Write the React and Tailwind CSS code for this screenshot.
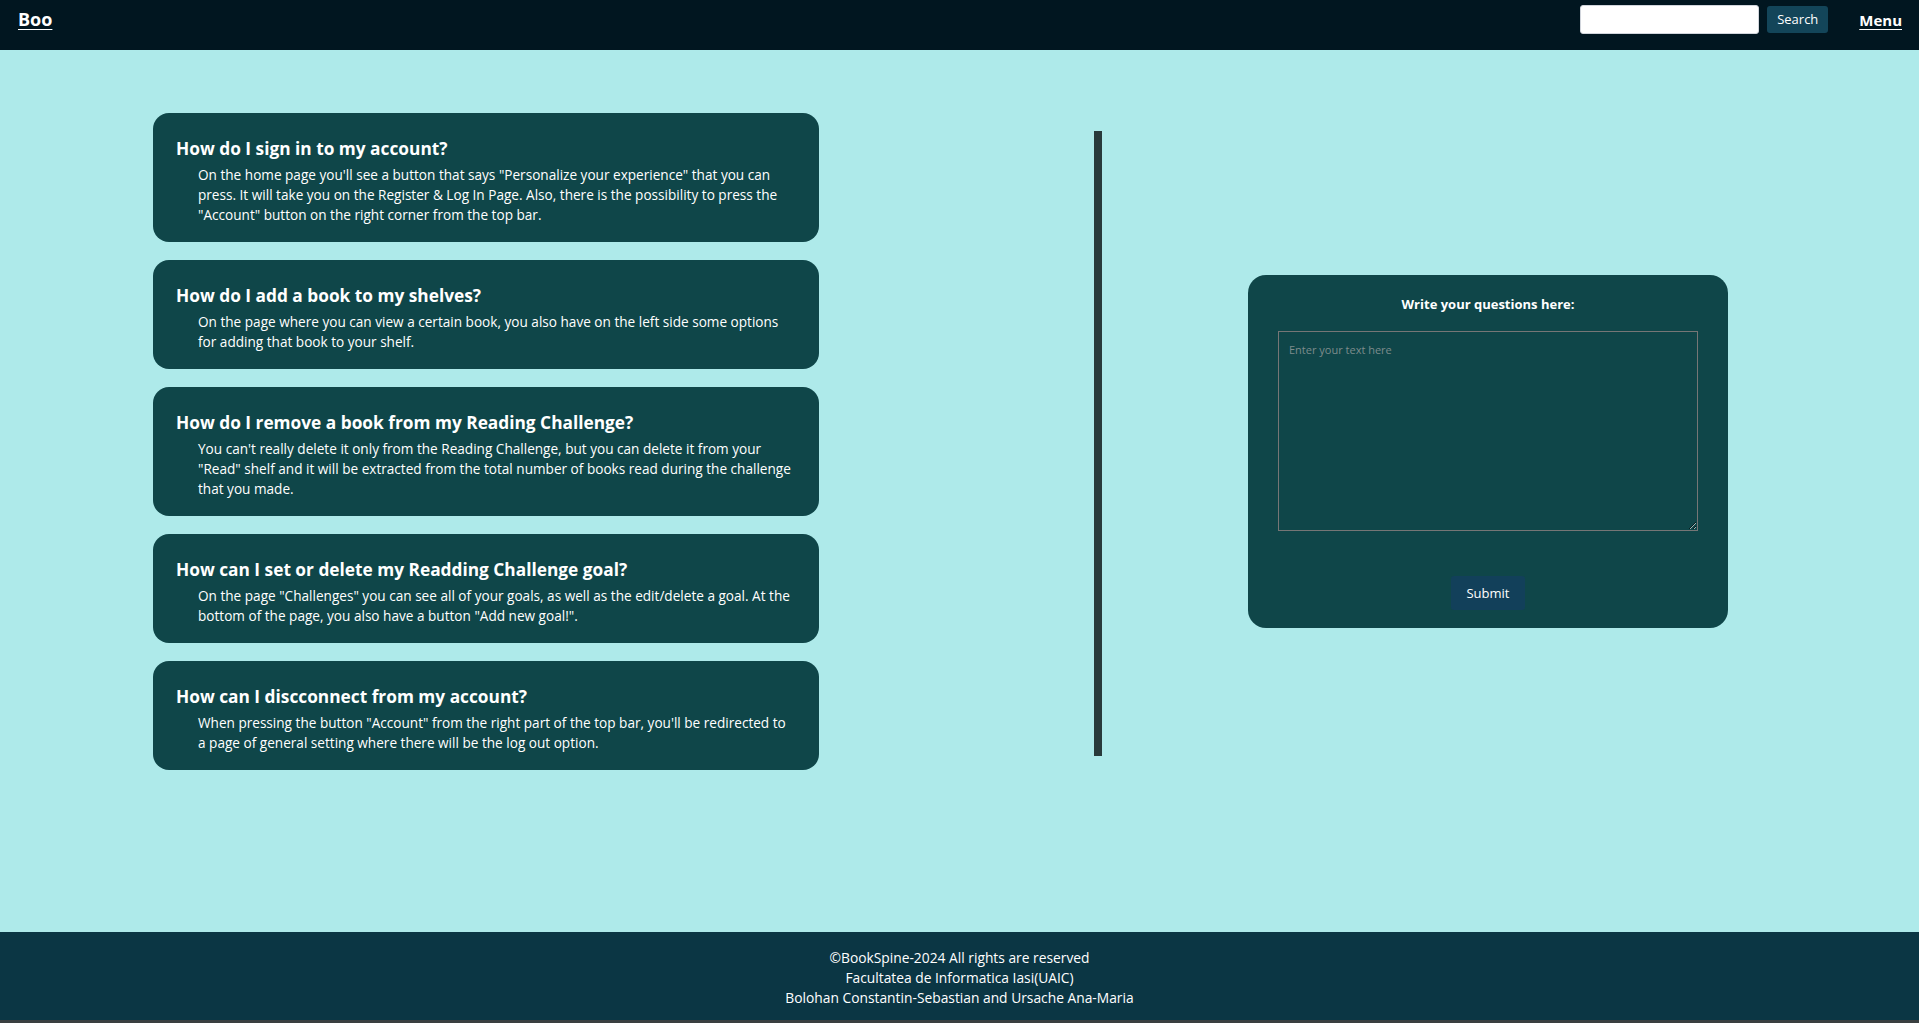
import React from "react";

const FAQS = [
  {
    q: "How do I sign in to my account?",
    a: 'On the home page you\'ll see a button that says "Personalize your experience" that you can press. It will take you on the Register & Log In Page. Also, there is the possibility to press the "Account" button on the right corner from the top bar.',
  },
  {
    q: "How do I add a book to my shelves?",
    a: "On the page where you can view a certain book, you also have on the left side some options for adding that book to your shelf.",
  },
  {
    q: "How do I remove a book from my Reading Challenge?",
    a: 'You can\'t really delete it only from the Reading Challenge, but you can delete it from your "Read" shelf and it will be extracted from the total number of books read during the challenge that you made.',
  },
  {
    q: "How can I set or delete my Readding Challenge goal?",
    a: 'On the page "Challenges" you can see all of your goals, as well as the edit/delete a goal. At the bottom of the page, you also have a button "Add new goal!".',
  },
  {
    q: "How can I discconnect from my account?",
    a: 'When pressing the button "Account" from the right part of the top bar, you\'ll be redirected to a page of general setting where there will be the log out option.',
  },
];

function TopBar() {
  return (
    <nav className="flex h-[50px] items-start justify-between bg-[#011620] text-white">
      <a href="#" className="pl-[18px] pt-[7px] text-[18px] font-bold leading-[24px] underline underline-offset-[3px]">
        Boo
      </a>
      <div className="flex items-start pr-[17px] pt-[5px]">
        <input
          type="text"
          className="h-[29px] w-[179px] rounded-[3px] border border-gray-300 bg-white px-2 text-sm text-black outline-none"
        />
        <button className="ml-[8px] mt-[1px] h-[27px] w-[61px] rounded-[3px] bg-[#134559] text-[13px] text-white">
          Search
        </button>
        <a href="#" className="ml-[31px] pt-[5px] text-[15px] font-bold leading-[20px] underline underline-offset-[3px]">
          Menu
        </a>
      </div>
    </nav>
  );
}

function FaqCard({ q, a }) {
  return (
    <div className="rounded-[16px] bg-[#0f4649] pb-[17px] pl-[23px] pr-[25px] pt-[24px] text-white">
      <h3 className="text-[17.3px] font-bold leading-[24px]">{q}</h3>
      <p className="mt-[4px] pl-[22px] text-[13.6px] leading-[20px]">{a}</p>
    </div>
  );
}

function QuestionForm() {
  return (
    <div className="mt-[20px] ml-[146px] flex w-[480px] flex-col items-center rounded-[18px] bg-[#0f4649] pb-[18px] pt-[20px] text-white">
      <div className="text-[13px] font-bold leading-[18px]">Write your questions here:</div>
      <textarea
        placeholder="Enter your text here"
        className="mt-[18px] h-[200px] w-[420px] border border-[#767676] bg-transparent px-[10px] py-[10px] text-[11px] text-white outline-none placeholder:text-[#7d8c8c]"
      />
      <button className="mt-[45px] h-[34px] w-[74px] rounded-[3px] bg-[#12405a] pt-[1px] text-[13px] text-white">
        Submit
      </button>
    </div>
  );
}

export default function App() {
  return (
    <div className="flex min-h-screen flex-col bg-[#aeeaea] font-['Open_Sans','Segoe_UI',sans-serif]">
      <TopBar />
      <main className="flex-1 pt-[63px]">
        <div className="flex items-center pl-[153px]">
          <div className="flex w-[666px] flex-col gap-[18px]">
            {FAQS.map((f) => (
              <FaqCard key={f.q} q={f.q} a={f.a} />
            ))}
          </div>
          <div className="ml-[275px] mt-[4px] h-[625px] w-[8px] bg-[#283a3b]" />
          <QuestionForm />
        </div>
      </main>
      <footer className="bg-[#0b3644] pb-[12px] pt-[16px] text-center text-[13.8px] leading-[20px] text-white">
        <div>©BookSpine-2024 All rights are reserved</div>
        <div>Facultatea de Informatica Iasi(UAIC)</div>
        <div>Bolohan Constantin-Sebastian and Ursache Ana-Maria</div>
      </footer>
      <div className="h-[3px] bg-[#3a3f40]" />
    </div>
  );
}
